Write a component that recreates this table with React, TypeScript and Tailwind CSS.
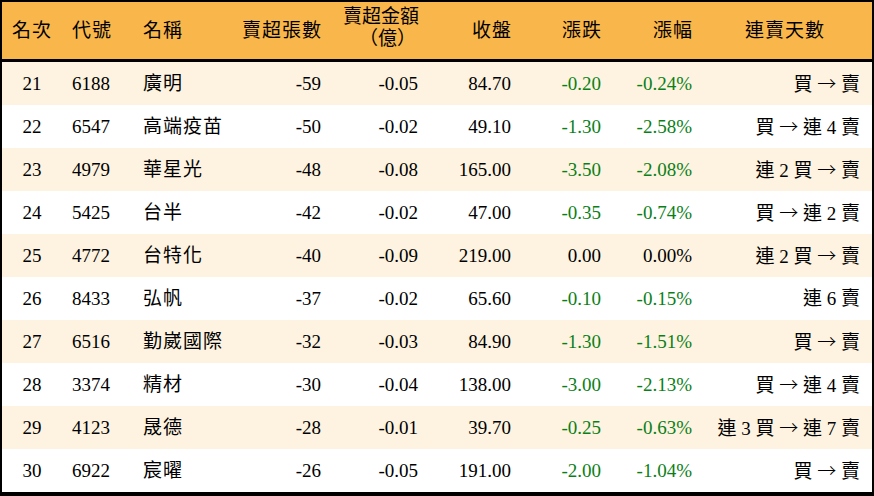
const rows = [
  { rank: 21, code: '6188', name: '廣明', lots: '-59', amt: '-0.05', close: '84.70', chg: '-0.20', pct: '-0.24%', days: '買 → 賣' },
  { rank: 22, code: '6547', name: '高端疫苗', lots: '-50', amt: '-0.02', close: '49.10', chg: '-1.30', pct: '-2.58%', days: '買 → 連 4 賣' },
  { rank: 23, code: '4979', name: '華星光', lots: '-48', amt: '-0.08', close: '165.00', chg: '-3.50', pct: '-2.08%', days: '連 2 買 → 賣' },
  { rank: 24, code: '5425', name: '台半', lots: '-42', amt: '-0.02', close: '47.00', chg: '-0.35', pct: '-0.74%', days: '買 → 連 2 賣' },
  { rank: 25, code: '4772', name: '台特化', lots: '-40', amt: '-0.09', close: '219.00', chg: '0.00', pct: '0.00%', days: '連 2 買 → 賣' },
  { rank: 26, code: '8433', name: '弘帆', lots: '-37', amt: '-0.02', close: '65.60', chg: '-0.10', pct: '-0.15%', days: '連 6 賣' },
  { rank: 27, code: '6516', name: '勤崴國際', lots: '-32', amt: '-0.03', close: '84.90', chg: '-1.30', pct: '-1.51%', days: '買 → 賣' },
  { rank: 28, code: '3374', name: '精材', lots: '-30', amt: '-0.04', close: '138.00', chg: '-3.00', pct: '-2.13%', days: '買 → 連 4 賣' },
  { rank: 29, code: '4123', name: '晟德', lots: '-28', amt: '-0.01', close: '39.70', chg: '-0.25', pct: '-0.63%', days: '連 3 買 → 連 7 賣' },
  { rank: 30, code: '6922', name: '宸曜', lots: '-26', amt: '-0.05', close: '191.00', chg: '-2.00', pct: '-1.04%', days: '買 → 賣' },
]

const cols = 'grid grid-cols-[60px_73px_105px_89px_97px_93px_90px_91px_172px]'

function colorOf(v: string) {
  return v.startsWith('-') ? 'text-[#0b7f17]' : 'text-black'
}

function Days({ text }: { text: string }) {
  const [left, right] = text.split(' → ')
  if (right === undefined) return <>{text}</>
  return (
    <>
      {left}
      {' '}
      <span className="font-['Noto_Sans_CJK_TC'] font-light">→</span>
      {' '}
      {right}
    </>
  )
}

export default function App() {
  return (
    <div
      className="w-[874px] h-[496px] border-2 border-b-4 border-black bg-white text-black text-[19px] leading-none"
      style={{ fontFamily: '"Liberation Serif", "Noto Sans CJK TC", serif' }}
    >
      {/* Header */}
      <div className={`${cols} h-[60px] bg-[#f9b64b] border-b-[3px] border-black items-center tracking-[1px]`}>
        <div className="text-center">名次</div>
        <div className="pl-[10px]">代號</div>
        <div className="pl-[8px]">名稱</div>
        <div className="text-right pr-[7px]">賣超張數</div>
        <div className="text-right pr-[7px] flex flex-col items-end gap-[3px] -mt-[6px] tracking-[0px]">
          <span>賣超金額</span>
          <span className="pr-[3px]">（億）</span>
        </div>
        <div className="text-right pr-[7px]">收盤</div>
        <div className="text-right pr-[7px]">漲跌</div>
        <div className="text-right pr-[7px]">漲幅</div>
        <div className="text-center pr-[2px]">連賣天數</div>
      </div>

      {/* Rows */}
      {rows.map((r, i) => (
        <div
          key={r.rank}
          className={`${cols} h-[43px] items-center ${i % 2 === 0 ? 'bg-[#fdf3e0]' : 'bg-white'}`}
        >
          <div className="text-center">{r.rank}</div>
          <div className="pl-[10px]">{r.code}</div>
          <div className="pl-[8px] tracking-[1px]">{r.name}</div>
          <div className="text-right pr-[8px]">{r.lots}</div>
          <div className="text-right pr-[8px]">{r.amt}</div>
          <div className="text-right pr-[8px]">{r.close}</div>
          <div className={`text-right pr-[8px] ${colorOf(r.chg)}`}>{r.chg}</div>
          <div className={`text-right pr-[8px] ${colorOf(r.pct)}`}>{r.pct}</div>
          <div className="text-right pr-[12px] whitespace-pre">
            <Days text={r.days} />
          </div>
        </div>
      ))}
    </div>
  )
}
